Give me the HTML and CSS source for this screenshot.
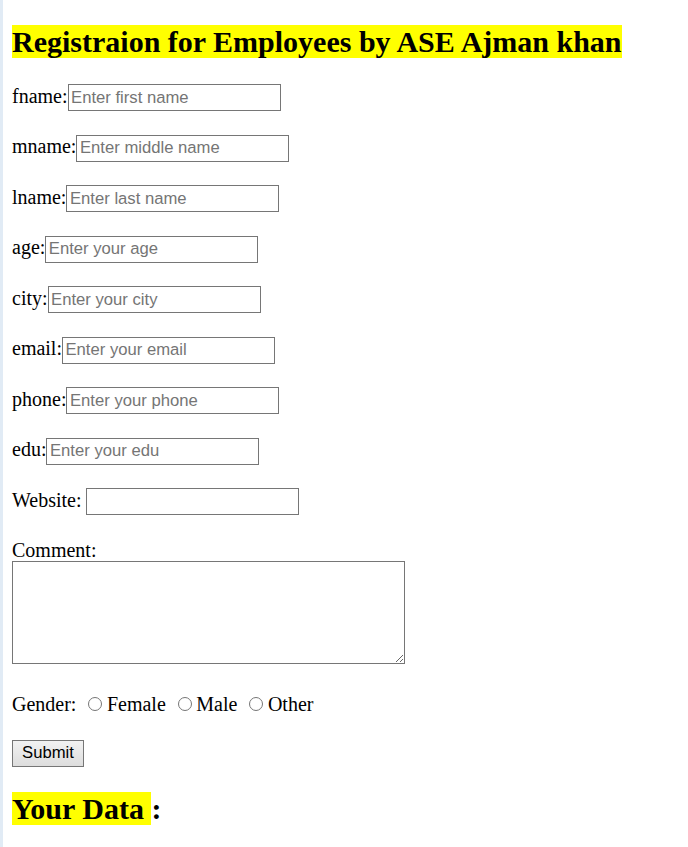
FILE: index.html
```html
<!DOCTYPE html>
<html>
<head>
<meta charset="utf-8">
<title>Registration</title>
<link rel="stylesheet" href="styles.css">
</head>
<body>
<h1 class="title"><mark class="hl">Registraion for Employees by ASE Ajman khan</mark></h1>
<form class="form">
  <div class="row"><label class="lbl">fname:</label><input class="field" type="text" placeholder="Enter first name"></div>
  <div class="row"><label class="lbl">mname:</label><input class="field" type="text" placeholder="Enter middle name"></div>
  <div class="row"><label class="lbl">lname:</label><input class="field" type="text" placeholder="Enter last name"></div>
  <div class="row"><label class="lbl">age:</label><input class="field" type="text" placeholder="Enter your age"></div>
  <div class="row"><label class="lbl">city:</label><input class="field" type="text" placeholder="Enter your city"></div>
  <div class="row"><label class="lbl">email:</label><input class="field" type="text" placeholder="Enter your email"></div>
  <div class="row"><label class="lbl">phone:</label><input class="field" type="text" placeholder="Enter your phone"></div>
  <div class="row"><label class="lbl">edu:</label><input class="field" type="text" placeholder="Enter your edu"></div>
  <div class="row"><label class="lbl">Website:</label><input class="field field-gap" type="text"></div>
  <label class="comment-label">Comment:</label>
  <textarea class="comment"></textarea>
  <div class="gender">Gender: <input class="radio" type="radio" name="g">Female <input class="radio" type="radio" name="g">Male <input class="radio" type="radio" name="g">Other</div>
  <button class="submit" type="button">Submit</button>
</form>
<h1 class="title title-data"><mark class="hl">Your Data </mark>:</h1>
</body>
</html>
```
FILE: styles.css
```css
html {
  background: #ffffff;
}
body {
  margin: 0;
  min-height: 847px;
  box-sizing: border-box;
  border-left: 3px solid #e1ebf5;
  padding: 25px 0 0 9px;
  font-family: "Liberation Serif", "Times New Roman", serif;
  font-size: 20px;
  line-height: 23px;
  color: #000;
}
.title {
  margin: 0;
  font-size: 30px;
  font-weight: bold;
  line-height: 33px;
}
.hl {
  background: #ffff00;
  color: #000;
}
.form {
  display: flex;
  flex-direction: column;
  align-items: flex-start;
  margin-top: 26px;
}
.row {
  display: flex;
  align-items: baseline;
  height: 27px;
  margin-bottom: 23.5px;
}
.lbl {
  white-space: pre;
}
.field {
  box-sizing: border-box;
  width: 213px;
  height: 27px;
  margin: 0;
  padding: 0 2.5px;
  border: 1px solid #767676;
  border-radius: 0;
  font-family: "Liberation Sans", Arial, sans-serif;
  font-size: 16.67px;
  color: #000;
  background: #fff;
  outline: none;
}
.field::placeholder {
  color: #757575;
}
.field-gap {
  margin-left: 5px;
}
.comment-label {
  display: block;
  margin-top: 0;
}
.comment {
  display: block;
  box-sizing: border-box;
  width: 393px;
  height: 103px;
  margin: -0.5px 0 0 0;
  padding: 2px;
  border: 1px solid #767676;
  border-radius: 0;
  font-family: "Liberation Mono", monospace;
  font-size: 16px;
}
.gender {
  margin-top: 28.5px;
}
.radio {
  appearance: none;
  -webkit-appearance: none;
  box-sizing: border-box;
  width: 14px;
  height: 14px;
  margin: 0 4.5px 0 7px;
  border: 1.4px solid #767676;
  border-radius: 50%;
  background: #fff;
  vertical-align: 0;
}
.submit {
  box-sizing: border-box;
  width: 72px;
  height: 27px;
  margin-top: 24px;
  padding: 0;
  border: 1px solid #767676;
  border-radius: 0;
  background: linear-gradient(#f2f2f2, #dddddd);
  font-family: "Liberation Sans", Arial, sans-serif;
  font-size: 16.67px;
  color: #000;
}
.title-data {
  margin-top: 25.5px;
}
```
